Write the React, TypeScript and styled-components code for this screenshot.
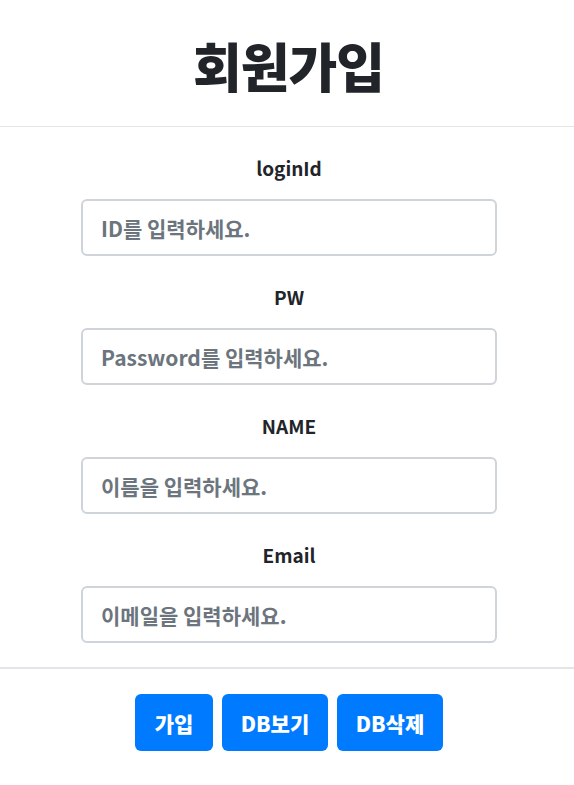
import React from "react";
import styled, { createGlobalStyle } from "styled-components";

const GlobalStyle = createGlobalStyle`
  html, body { margin: 0; padding: 0; background: #fff; }
  body { font-family: "Noto Sans CJK KR", "Noto Sans", sans-serif; color: #212529; }
  * { box-sizing: border-box; }
`;

const Page = styled.div`
  width: 574px;
  display: flex;
  flex-direction: column;
`;

const Header = styled.header`
  height: 127px;
  display: flex;
  align-items: center;
  justify-content: center;
  border-bottom: 1px solid #e3e5e8;
`;

const Title = styled.h1`
  margin: 0;
  margin-top: 4px;
  margin-left: 3px;
  font-size: 53px;
  font-weight: 900;
  color: #212529;
  letter-spacing: -1px;
`;

const Form = styled.form`
  display: flex;
  flex-direction: column;
  gap: 29px;
  padding: 29px 77px 24px 81px;
  border-bottom: 2px solid #e3e5e8;
`;

const Field = styled.div`
  display: flex;
  flex-direction: column;
  align-items: center;
  gap: 19px;
`;

const Label = styled.label`
  height: 24px;
  line-height: 24px;
  font-size: 19px;
  font-weight: 700;
  color: #212529;
`;

const Input = styled.input`
  width: 416px;
  height: 57px;
  padding: 0 18px;
  border: 2px solid #ced4da;
  border-radius: 6px;
  font-family: inherit;
  font-size: 21px;
  font-weight: 700;
  color: #495057;
  outline: none;
  &::placeholder { color: #6c757d; }
`;

const Actions = styled.div`
  display: flex;
  justify-content: center;
  gap: 9px;
  padding: 25px 0 0 4px;
`;

const Button = styled.button<{ $w: number }>`
  width: ${(p) => p.$w}px;
  height: 57px;
  border: none;
  border-radius: 6px;
  background: #007bff;
  color: #fff;
  font-family: inherit;
  font-size: 21px;
  font-weight: 900;
  cursor: pointer;
`;

const fields = [
  { id: "loginId", label: "loginId", ph: "ID를 입력하세요.", type: "text" },
  { id: "pw", label: "PW", ph: "Password를 입력하세요.", type: "password" },
  { id: "name", label: "NAME", ph: "이름을 입력하세요.", type: "text" },
  { id: "email", label: "Email", ph: "이메일을 입력하세요.", type: "email" },
];

export default function App() {
  return (
    <Page>
      <GlobalStyle />
      <Header>
        <Title>회원가입</Title>
      </Header>
      <Form onSubmit={(e) => e.preventDefault()}>
        {fields.map((f) => (
          <Field key={f.id}>
            <Label htmlFor={f.id}>{f.label}</Label>
            <Input id={f.id} type={f.type} placeholder={f.ph} />
          </Field>
        ))}
      </Form>
      <Actions>
        <Button $w={78}>가입</Button>
        <Button $w={106}>DB보기</Button>
        <Button $w={106}>DB삭제</Button>
      </Actions>
    </Page>
  );
}
